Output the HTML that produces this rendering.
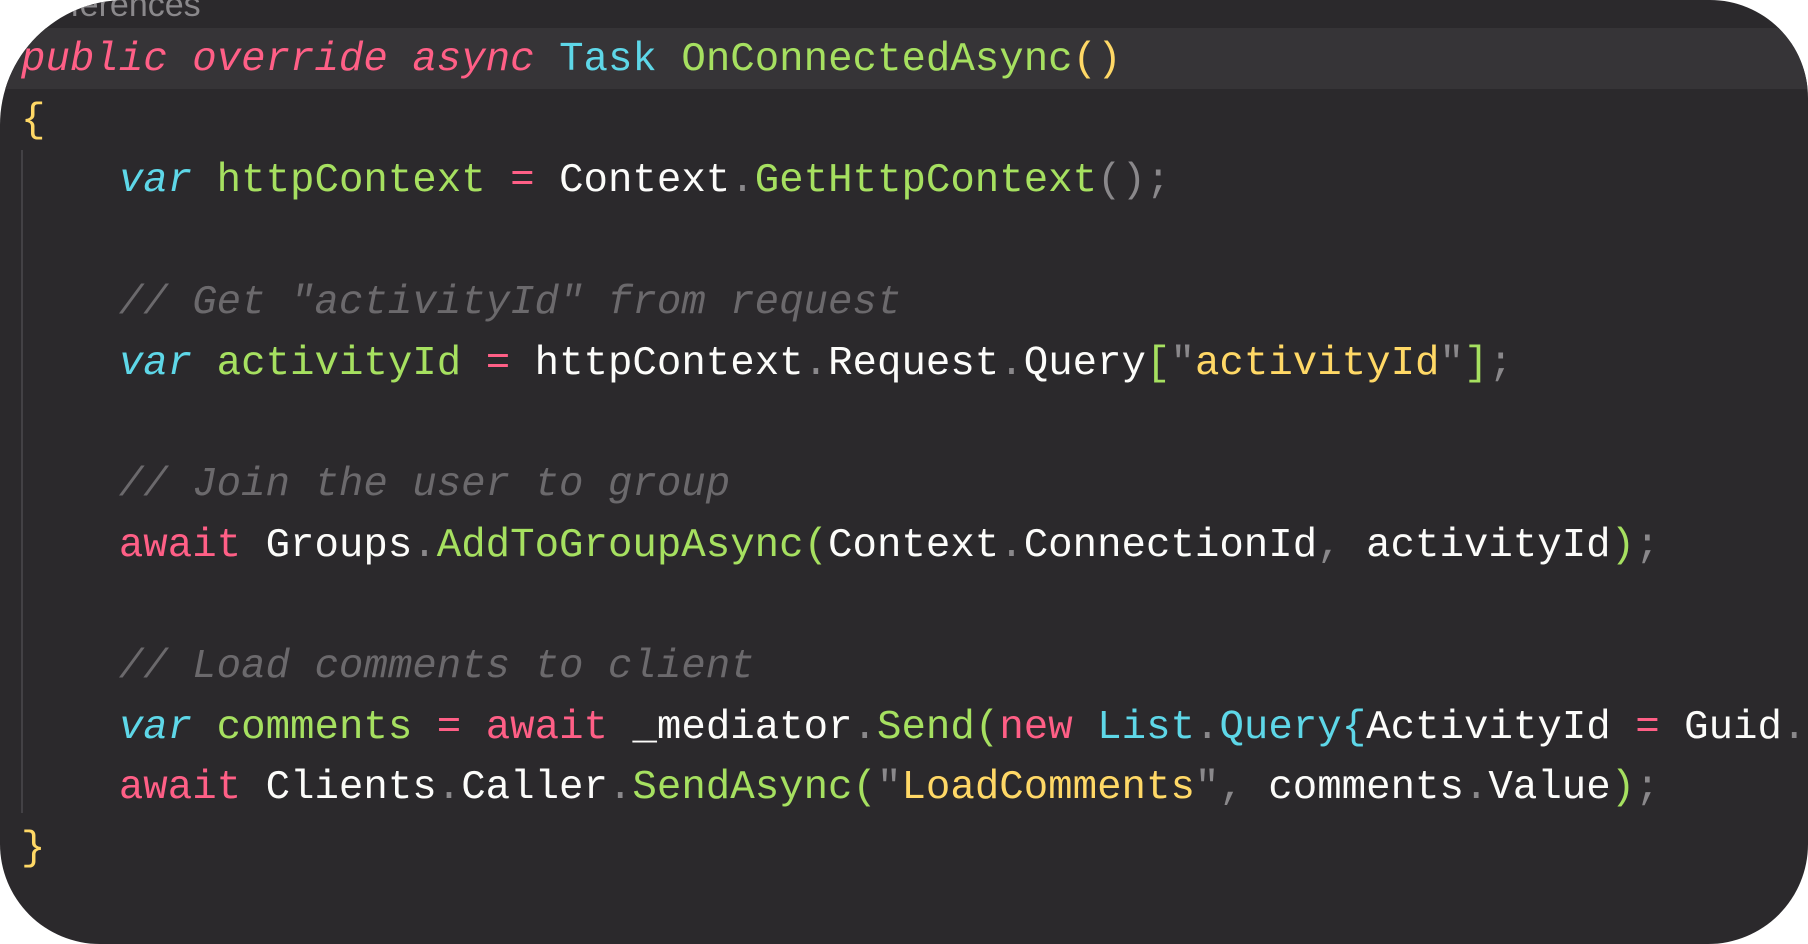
<!DOCTYPE html>
<html><head><meta charset="utf-8"><style>
html,body{margin:0;padding:0;background:#fff;}
#c{position:relative;width:1808px;height:944px;background:#2b292c;border-radius:125px 98px 100px 100px;overflow:hidden;}
.ref{position:absolute;left:40px;top:-14px;font:34px "Liberation Sans",sans-serif;color:#8a888b;}
.hl{position:absolute;left:0;top:28px;width:1808px;height:61px;background:#363437;}
.guide{position:absolute;left:21px;top:150px;width:2px;height:663px;background:#434145;}
pre{position:absolute;left:21px;top:30px;margin:0;font-family:"Liberation Mono",monospace;font-size:40.75px;line-height:60.7px;color:#fcfcfa;white-space:pre;}
.k{color:#ff5f86;font-style:italic}.a{color:#ff5f86}
.t{color:#5ed7e8}.v{color:#5ed7e8;font-style:italic}
.m{color:#a6e060}.y{color:#ffd866}.c{color:#6b696c;font-style:italic}
.p{color:#8a888b}.w{color:#fcfcfa}.g{color:#a6e060}
</style></head><body><div id="c">
<div class="ref">references</div>
<div class="hl"></div>
<div class="guide"></div>
<pre><span class="k">public</span> <span class="k">override</span> <span class="k">async</span> <span class="t">Task</span> <span class="m">OnConnectedAsync</span><span class="y">()</span>
<span class="y">{</span>
    <span class="v">var</span> <span class="m">httpContext</span> <span class="a">=</span> Context<span class="p">.</span><span class="m">GetHttpContext</span><span class="p">();</span>

    <span class="c">// Get "activityId" from request</span>
    <span class="v">var</span> <span class="m">activityId</span> <span class="a">=</span> httpContext<span class="p">.</span>Request<span class="p">.</span>Query<span class="g">[</span><span class="p">"</span><span class="y">activityId</span><span class="p">"</span><span class="g">]</span><span class="p">;</span>

    <span class="c">// Join the user to group</span>
    <span class="a">await</span> Groups<span class="p">.</span><span class="m">AddToGroupAsync</span><span class="g">(</span>Context<span class="p">.</span>ConnectionId<span class="p">,</span> activityId<span class="g">)</span><span class="p">;</span>

    <span class="c">// Load comments to client</span>
    <span class="v">var</span> <span class="m">comments</span> <span class="a">=</span> <span class="a">await</span> _mediator<span class="p">.</span><span class="m">Send</span><span class="g">(</span><span class="a">new</span> <span class="t">List</span><span class="p">.</span><span class="t">Query{</span>ActivityId <span class="a">=</span> Guid<span class="p">.</span>Parse(activityId)})
    <span class="a">await</span> Clients<span class="p">.</span>Caller<span class="p">.</span><span class="m">SendAsync</span><span class="g">(</span><span class="p">"</span><span class="y">LoadComments</span><span class="p">"</span><span class="p">,</span> comments<span class="p">.</span>Value<span class="g">)</span><span class="p">;</span>
<span class="y">}</span></pre>
</div></body></html>
